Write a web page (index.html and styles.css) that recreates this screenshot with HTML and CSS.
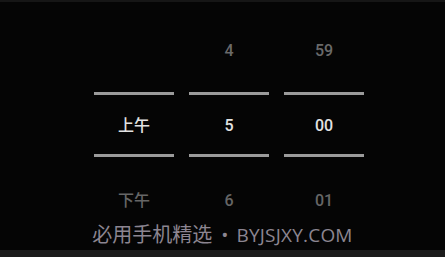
FILE: index.html
```html
<!DOCTYPE html>
<html lang="zh">
<head>
<meta charset="utf-8">
<link rel="stylesheet" href="styles.css">
</head>
<body>
<div class="screen">
  <div class="topbar"></div>
  <div class="picker">
    <div class="col">
      <div class="cell top"></div>
      <div class="line first"></div>
      <div class="cell mid">上午</div>
      <div class="line"></div>
      <div class="cell bot">下午</div>
    </div>
    <div class="col">
      <div class="cell top">4</div>
      <div class="line first"></div>
      <div class="cell mid">5</div>
      <div class="line"></div>
      <div class="cell bot">6</div>
    </div>
    <div class="col">
      <div class="cell top">59</div>
      <div class="line first"></div>
      <div class="cell mid">00</div>
      <div class="line"></div>
      <div class="cell bot">01</div>
    </div>
  </div>
  <div class="watermark"><span class="wm-cn">必用手机精选</span><span class="wm-dot">•</span><span class="wm-en">BYJSJXY.COM</span></div>
  <div class="bottombar"></div>
</div>
</body>
</html>
```
FILE: styles.css
```css
html, body {
  margin: 0;
  padding: 0;
  background: #050505;
}
.screen {
  width: 445px;
  height: 257px;
  display: flex;
  flex-direction: column;
  overflow: hidden;
  font-family: Roboto, "Noto Sans CJK SC", sans-serif;
}
.topbar {
  height: 2px;
  background: #161616;
  flex: none;
}
.picker {
  display: flex;
  gap: 15px;
  padding-left: 94px;
  flex: none;
}
.col {
  width: 80px;
  display: flex;
  flex-direction: column;
}
.cell {
  text-align: center;
  font-size: 16px;
  font-weight: 500;
}
.cell.top {
  height: 50px;
  line-height: 50px;
  margin-top: 24px;
  color: #6a6a6a;
}
.line {
  height: 3px;
  background: #9b9b9b;
}
.line.first {
  margin-top: 16px;
}
.cell.mid {
  height: 59px;
  line-height: 61px;
  color: #e2e2e2;
}
.cell.bot {
  height: 40px;
  line-height: 42px;
  margin-top: 23px;
  color: #666666;
}
.watermark {
  flex: none;
  height: 30px;
  line-height: 28px;
  text-align: center;
  font-family: "Open Sans", "Noto Sans CJK SC", sans-serif;
  font-size: 19px;
  color: #8c8591;
  white-space: nowrap;
}
.wm-cn {
  font-family: "Noto Sans CJK SC", sans-serif;
  font-size: 20px;
}
.wm-dot {
  margin: 0 8px 0 9px;
}
.wm-en {
  letter-spacing: 0.2px;
}
.bottombar {
  flex: 1;
  background: #1b1b1b;
}
```
